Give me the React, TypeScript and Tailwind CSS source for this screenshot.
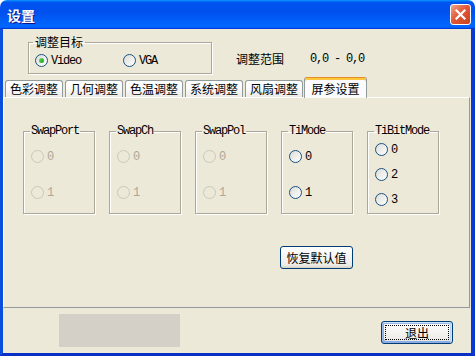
import clsx from "clsx";

const MONO = "font-['Liberation_Mono','Noto_Sans_CJK_SC',monospace] tracking-[-1.2px]";

const TABS = ["色彩调整", "几何调整", "色温调整", "系统调整", "风扇调整"];

const GROUPS = [
  { title: "SwapPort", options: ["0", "1"], disabled: true },
  { title: "SwapCh", options: ["0", "1"], disabled: true },
  { title: "SwapPol", options: ["0", "1"], disabled: true },
  { title: "TiMode", options: ["0", "1"], disabled: false },
  { title: "TiBitMode", options: ["0", "2", "3"], disabled: false },
];

type RadioProps = {
  label: string;
  checked?: boolean;
  disabled?: boolean;
  className?: string;
};

function Radio({ label, checked = false, disabled = false, className }: RadioProps) {
  return (
    <div className={clsx("flex items-center h-[13px]", className)}>
      <span
        className={clsx(
          "w-[13px] h-[13px] shrink-0 rounded-full border flex items-center justify-center",
          disabled
            ? "border-[#cac8bb] bg-[#ece9d8]"
            : "border-[#1c5180] bg-[linear-gradient(135deg,#dcdcd7,#ffffff)]"
        )}
      >
        {checked && (
          <span className="w-[5px] h-[5px] rounded-full bg-[linear-gradient(135deg,#62da5e,#18a018)]" />
        )}
      </span>
      <span className={clsx("ml-[3px] leading-[12px]", MONO, disabled ? "text-[#aca899]" : "text-black")}>
        {label}
      </span>
    </div>
  );
}

function TitleBar() {
  return (
    <div className="h-[29px] shrink-0 rounded-t-[7px] flex items-center pl-[7px] pr-[4px] bg-[linear-gradient(180deg,#0997ff,#0053ee_8%,#0050ee_40%,#0066ff_88%,#0066ff_93%,#005bff_95%,#003dd7_96%,#003dd7)]">
      <span className="text-white font-bold text-[14px] leading-[14px] [text-shadow:1px_1px_#0f1089]">设置</span>
      <button className="ml-auto w-[21px] h-[21px] rounded-[3px] border border-white bg-[linear-gradient(135deg,#f3a58c,#e2583a_45%,#c8401f)] flex items-center justify-center">
        <svg width="13" height="13" viewBox="0 0 13 13">
          <path d="M2.5 2.5 L10.5 10.5 M10.5 2.5 L2.5 10.5" stroke="#ffffff" strokeWidth="2.2" strokeLinecap="square" />
        </svg>
      </button>
    </div>
  );
}

export default function App() {
  return (
    <div className="w-[475px] h-[356px] flex flex-col font-['Noto_Sans_CJK_SC',sans-serif] text-[12px] leading-[12px] text-black">
      <TitleBar />
      <div className="flex-1 flex flex-col bg-[#ece9d8] border-l-[3px] border-r-[4px] border-b-[3px] border-l-[#0b4ddd] border-r-[#0a3ad0] border-b-[#0a2fc4]">
        {/* target selection */}
        <div className="h-[48px] shrink-0 flex items-start">
          <fieldset className="ml-[25px] mt-[7px] w-[184px] h-[38px] border border-[#aca899] shadow-[inset_1px_1px_0_#fff,1px_1px_0_#fff] pl-[4px]">
            <legend className="px-[2px] leading-[12px]">调整目标</legend>
            <div className="flex mt-[6px] ml-[2px]">
              <Radio label="Video" checked className="w-[88px]" />
              <Radio label="VGA" />
            </div>
          </fieldset>
          <span className="ml-[24px] mt-[24px]">调整范围</span>
          <span className={clsx("ml-[26px] mt-[24px]", MONO)}>0,0 - 0,0</span>
        </div>

        {/* tabs */}
        <div className="h-[20px] shrink-0 flex items-end gap-[2px] pl-[2px] relative z-10">
          {TABS.map((t) => (
            <div
              key={t}
              className="w-[58px] h-[17px] border border-b-0 border-[#919b9c] rounded-t-[3px] bg-[linear-gradient(180deg,#ffffff,#fcfcfe_40%,#ecebe6)] flex items-center justify-center"
            >
              {t}
            </div>
          ))}
          <div className="w-[63px] h-[21px] -ml-[1px] -mb-[1px] border-x border-[#919b9c] border-t border-t-[#e68b2c] rounded-t-[3px] bg-[#fcfcfe] shadow-[inset_0_2px_0_#ffc73c] flex items-center justify-center pt-[1px]">
            屏参设置
          </div>
        </div>

        {/* panel */}
        <div className="h-[211px] shrink-0 mr-[1px] border border-t-white border-l-white border-r-[#919b9c] border-b-[#919b9c] pl-[19px] pt-[27px]">
          <div className="flex gap-[14px]">
            {GROUPS.map((g) => (
              <fieldset
                key={g.title}
                className="w-[72px] h-[89px] border border-[#aca899] shadow-[inset_1px_1px_0_#fff,1px_1px_0_#fff] pl-[6px]"
              >
                <legend className={clsx("px-[1px] leading-[12px]", MONO)}>{g.title}</legend>
                {g.options.length === 2 ? (
                  <div className="flex flex-col ml-[1px]">
                    <Radio label={g.options[0]} disabled={g.disabled} className="mt-[13px]" />
                    <Radio label={g.options[1]} disabled={g.disabled} className="mt-[23px]" />
                  </div>
                ) : (
                  <div className="flex flex-col gap-[12px] mt-[6px] ml-[1px]">
                    {g.options.map((o) => (
                      <Radio key={o} label={o} disabled={g.disabled} />
                    ))}
                  </div>
                )}
              </fieldset>
            ))}
          </div>
          <button className="mt-[32px] ml-[257px] w-[73px] h-[23px] rounded-[3px] border border-[#003c74] bg-[linear-gradient(180deg,#ffffff,#ecebe6_86%,#d6d0c5)] flex items-center justify-center">
            恢复默认值
          </button>
        </div>

        {/* bottom */}
        <div className="flex-1 flex items-start">
          <div className="ml-[56px] mt-[6px] w-[121px] h-[33px] bg-[#d4d0c8]" />
          <button className="ml-auto mr-[18px] mt-[13px] w-[72px] h-[23px] rounded-[3px] border border-[#003c74] bg-[linear-gradient(180deg,#ffffff,#ecebe6_86%,#d6d0c5)] shadow-[inset_-1px_1px_#cee7ff,inset_1px_2px_#98b8ea,inset_-2px_2px_#bcd4f6,inset_1px_-1px_#89ade4,inset_2px_-2px_#89ade4] p-[3px]">
            <div className="w-full h-full border border-dotted border-black flex items-center justify-center">
              退出
            </div>
          </button>
        </div>
      </div>
    </div>
  );
}
